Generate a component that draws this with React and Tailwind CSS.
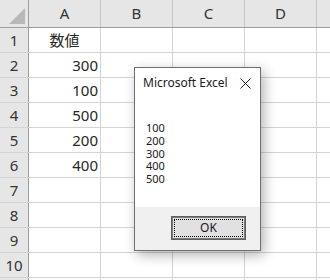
import React from "react";

const cols = ["A", "B", "C", "D", ""];
const values = ["数値", "300", "100", "500", "200", "400"];
const rows = [1, 2, 3, 4, 5, 6, 7, 8, 9, 10];

const Sheet = () => {
  return (
    <div className="w-[330px] h-[280px] overflow-hidden bg-white text-[#262626] font-['Noto_Sans','Noto_Sans_CJK_JP',sans-serif]">
      {/* column header */}
      <div className="flex h-[28px] bg-[#e6e6e6] border-b border-[#9e9e9e]">
        <div className="relative w-[29px] shrink-0 border-r border-[#9e9e9e]">
          <div className="absolute right-[3px] bottom-[3px] w-0 h-0 border-l-[16px] border-l-transparent border-b-[16px] border-b-[#b9b9b9]" />
        </div>
        {cols.map((c, i) => (
          <div
            key={i}
            className="w-[72px] shrink-0 flex items-center justify-center border-r border-[#c6c6c6] text-[15px] leading-none text-[#333]"
          >
            {c}
          </div>
        ))}
      </div>
      {rows.map((r) => (
        <div key={r} className="flex h-[25px] border-b border-[#d4d4d4]">
          <div className="w-[29px] shrink-0 flex items-center justify-center bg-[#e6e6e6] border-r border-[#9e9e9e] text-[15px] text-[#333]">
            {r}
          </div>
          {cols.map((c, i) => (
            <div
              key={i}
              className={`w-[72px] shrink-0 flex items-center border-r border-[#d4d4d4] text-[15px] ${
                r === 1 ? "justify-center" : "justify-end pr-[2px]"
              }`}
            >
              {i === 0 ? values[r - 1] : ""}
            </div>
          ))}
        </div>
      ))}
      {/* partial row 11, label falls below the window */}
      <div className="flex h-[25px]">
        <div className="w-[29px] shrink-0 bg-[#e6e6e6] border-r border-[#9e9e9e]" />
        {cols.map((c, i) => (
          <div key={i} className="w-[72px] shrink-0 border-r border-[#d4d4d4]" />
        ))}
      </div>
    </div>
  );
};

const MsgBox = () => {
  return (
    <div className="absolute left-[134px] top-[67px] w-[127px] h-[184px] flex flex-col bg-white border border-[#6f6f6f] shadow-[3px_4px_12px_rgba(0,0,0,0.3)] font-['Noto_Sans',sans-serif]">
      <div className="flex items-center justify-between h-[29px] pl-[8px] pr-[9px] pt-[1px]">
        <span className="text-[12px] text-[#1a1a1a]">Microsoft Excel</span>
        <svg width="11" height="11" viewBox="0 0 11 11">
          <path d="M0.5 0.5 L10.5 10.5 M10.5 0.5 L0.5 10.5" stroke="#222" strokeWidth="1" />
        </svg>
      </div>
      <div className="flex-1 pl-[11px] pt-[25px] text-[11px] leading-[12.75px] text-[#1a1a1a]">
        <div>100</div>
        <div>200</div>
        <div>300</div>
        <div>400</div>
        <div>500</div>
      </div>
      <div className="h-[43px] bg-[#f0f0f0] flex justify-end items-start pt-[9px] pr-[14px]">
        <div className="w-[75px] h-[24px] p-[2px] bg-[#e1e1e1] border border-[#5e5e5e] shadow-[inset_0_0_0_1px_#7a7a7a]">
          <div className="w-full h-full flex items-center justify-center border border-dotted border-black text-[12px] text-[#1a1a1a]">
            OK
          </div>
        </div>
      </div>
    </div>
  );
};

export default function App() {
  return (
    <div className="relative w-[330px] h-[280px]">
      <Sheet />
      <MsgBox />
    </div>
  );
}
